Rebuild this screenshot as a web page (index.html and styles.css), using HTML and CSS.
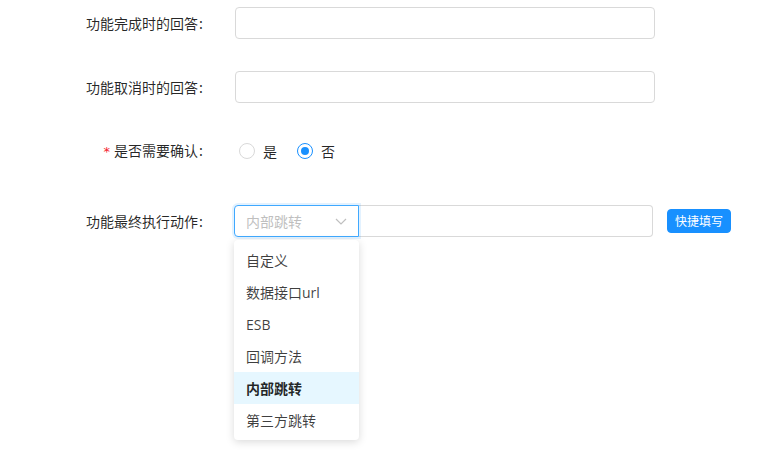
FILE: index.html
```html
<!DOCTYPE html>
<html lang="zh-CN">
<head>
<meta charset="utf-8">
<title>表单</title>
<link rel="stylesheet" href="styles.css">
</head>
<body>
<form class="form">
  <div class="row">
    <label class="label">功能完成时的回答<span class="colon">:</span></label>
    <div class="control"><div class="input wide"></div></div>
  </div>
  <div class="row">
    <label class="label">功能取消时的回答<span class="colon">:</span></label>
    <div class="control"><div class="input wide"></div></div>
  </div>
  <div class="row row-radio">
    <label class="label"><span class="req">*</span>是否需要确认<span class="colon">:</span></label>
    <div class="control radios">
      <span class="radio"><span class="circle"></span><span class="rtext">是</span></span>
      <span class="radio checked"><span class="circle"></span><span class="rtext">否</span></span>
    </div>
  </div>
  <div class="row">
    <label class="label">功能最终执行动作<span class="colon">:</span></label>
    <div class="control group">
      <div class="select">
        <span class="sel-value">内部跳转</span>
        <svg class="arrow" width="12" height="12" viewBox="0 0 12 12"><path d="M1 4 L6 9 L11 4" fill="none" stroke="#bfbfbf" stroke-width="1.2"/></svg>
        <ul class="dropdown">
          <li>自定义</li>
          <li>数据接口url</li>
          <li>ESB</li>
          <li>回调方法</li>
          <li class="active">内部跳转</li>
          <li>第三方跳转</li>
        </ul>
      </div>
      <div class="input addon"></div>
      <button type="button" class="btn">快捷填写</button>
    </div>
  </div>
</form>
</body>
</html>
```

FILE: styles.css
```css
html, body {
  margin: 0;
  padding: 0;
  background: #fff;
}
html {
  height: 100%;
}
body {
  min-height: 451px;
  font-family: "Open Sans", "Noto Sans CJK SC", sans-serif;
  font-size: 14px;
  color: rgba(0, 0, 0, 0.85);
}
.form {
  padding-top: 7px;
}
.row {
  display: flex;
  align-items: center;
  height: 32px;
  margin-bottom: 32px;
}
.row-radio {
  margin-bottom: 38px;
}
.label {
  width: 203px;
  flex: none;
  text-align: right;
  line-height: 32px;
  color: rgba(0, 0, 0, 0.85);
  font-family: "Noto Sans CJK SC", sans-serif;
}
.colon {
  margin-left: 1px;
}
.req {
  color: #f5222d;
  margin-right: 4px;
  font-family: "DejaVu Sans", sans-serif;
  font-size: 13px;
}
.control {
  margin-left: 32px;
  display: flex;
  align-items: center;
}
.input {
  box-sizing: border-box;
  height: 32px;
  border: 1px solid #d9d9d9;
  border-radius: 4px;
  background: #fff;
}
.wide {
  width: 420px;
}
.radios {
  padding-left: 4px;
}
.radio {
  display: inline-flex;
  align-items: center;
  margin-right: 12px;
  line-height: 22px;
}
.circle {
  box-sizing: border-box;
  width: 16px;
  height: 16px;
  border: 1px solid #d9d9d9;
  border-radius: 50%;
  position: relative;
  background: #fff;
}
.checked .circle {
  border-color: #1890ff;
}
.checked .circle::after {
  content: "";
  position: absolute;
  left: 3px;
  top: 3px;
  width: 8px;
  height: 8px;
  border-radius: 50%;
  background: #1890ff;
}
.rtext {
  padding: 0 8px;
  font-family: "Noto Sans CJK SC", sans-serif;
  color: rgba(0, 0, 0, 0.85);
}
.group {
  margin-left: 31px;
}
.select {
  position: relative;
  box-sizing: border-box;
  width: 125px;
  height: 32px;
  border: 1px solid #40a9ff;
  border-radius: 4px 0 0 4px;
  box-shadow: 0 0 0 2px rgba(24, 144, 255, 0.12);
  display: flex;
  align-items: center;
  padding: 0 11px;
  background: #fff;
  z-index: 2;
}
.sel-value {
  flex: 1;
  color: #bfbfbf;
  font-family: "Noto Sans CJK SC", sans-serif;
  line-height: 22px;
}
.arrow {
  flex: none;
}
.addon {
  width: 294px;
  border-left: none;
  border-radius: 0 4px 4px 0;
}
.btn {
  margin-left: 14px;
  height: 24px;
  padding: 0 7px;
  border: 1px solid #1890ff;
  border-radius: 4px;
  background: #1890ff;
  color: #fff;
  font-family: "Noto Sans CJK SC", sans-serif;
  font-size: 12px;
  line-height: 22px;
}
.dropdown {
  position: absolute;
  left: -1px;
  top: calc(100% + 4px);
  width: 125px;
  box-sizing: border-box;
  margin: 0;
  padding: 4px 0;
  list-style: none;
  background: #fff;
  border-radius: 4px;
  box-shadow: 0 2px 8px rgba(0, 0, 0, 0.15);
  z-index: 10;
}
.dropdown li {
  padding: 6px 12px 4px;
  line-height: 22px;
  color: rgba(0, 0, 0, 0.75);
  white-space: nowrap;
}
.dropdown li.active {
  background: #e6f7ff;
  font-weight: 600;
  color: rgba(0, 0, 0, 0.85);
}
```
